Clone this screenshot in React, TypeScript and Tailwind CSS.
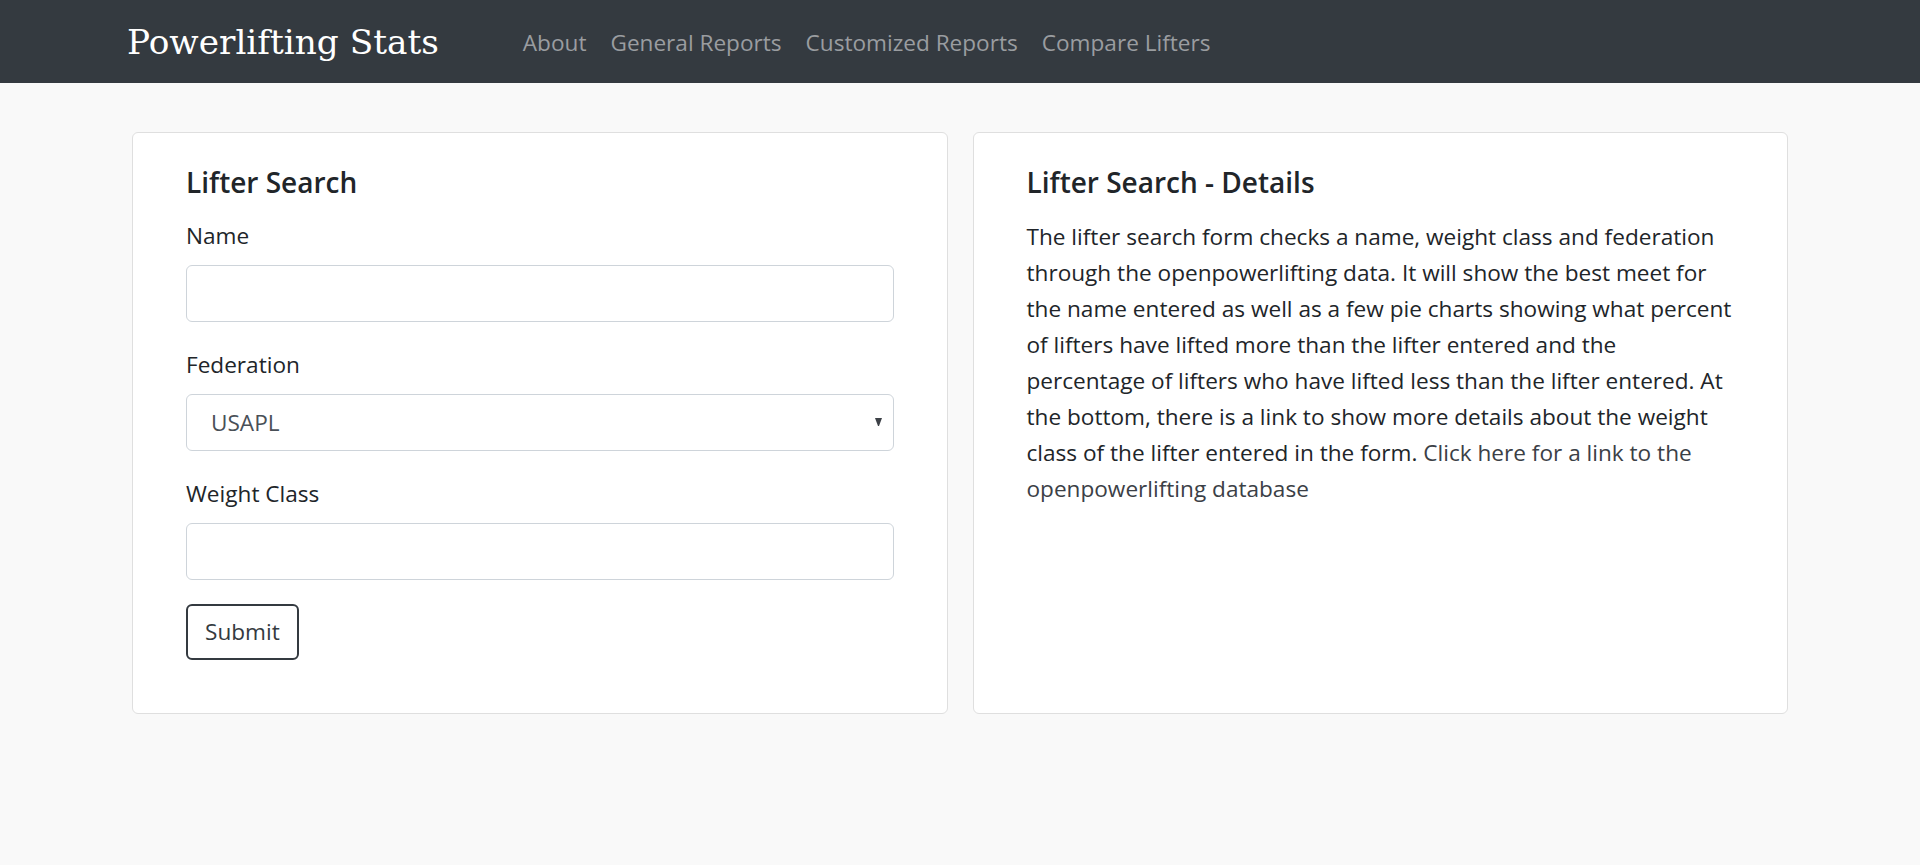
import React from "react";

const navLinks = ["About", "General Reports", "Customized Reports", "Compare Lifters"];

const labelCls = "block h-[36px] text-[22.6px] leading-[38px] text-[#212529] mb-[12px]";
const inputCls =
  "block w-full h-[57px] rounded-[6px] border border-[#ced4da] bg-white px-[18px] text-[22.6px] text-[#495057] outline-none";

const Navbar = () => (
  <nav className="bg-[#343a40] h-[83px]">
    <div className="mx-auto w-[1710px] px-[22px] h-full flex items-center">
      <a
        href="#"
        className="text-white text-[34.3px] leading-[40px] whitespace-nowrap"
        style={{ fontFamily: '"DejaVu Serif", serif' }}
      >
        Powerlifting Stats
      </a>
      <ul className="flex items-center ml-[72px] pt-[2px]">
        {navLinks.map((link) => (
          <li key={link}>
            <a href="#" className="block px-[12px] text-[22.6px] leading-[36px] text-[#9a9da0] whitespace-nowrap">
              {link}
            </a>
          </li>
        ))}
      </ul>
    </div>
  </nav>
);

const SearchForm = () => (
  <div className="bg-white border border-[#dfdfdf] rounded-[6px] pt-[30px] pb-[53px] px-[53px]">
    <h5 className="h-[36px] text-[28px] leading-[38px] font-semibold text-[#212529] mb-[18px]">Lifter Search</h5>
    <form onSubmit={(e) => e.preventDefault()}>
      <div className="mb-[24px]">
        <label className={labelCls}>Name</label>
        <input type="text" className={inputCls} />
      </div>
      <div className="mb-[24px]">
        <label className={labelCls}>Federation</label>
        <div className="relative">
          <select className={`${inputCls} appearance-none pl-[24px]`} defaultValue="USAPL">
            <option>USAPL</option>
            <option>IPF</option>
            <option>USPA</option>
          </select>
          <svg
            className="absolute right-[12px] top-[24px] pointer-events-none"
            width="7"
            height="9"
            viewBox="0 0 7 9"
          >
            <polygon points="0,0 7,0 4,8 3,8" fill="#3d4147" />
          </svg>
        </div>
      </div>
      <div className="mb-[24px]">
        <label className={labelCls}>Weight Class</label>
        <input type="text" className={inputCls} />
      </div>
      <button
        type="submit"
        className="h-[56px] px-[17px] rounded-[6px] border-2 border-[#343a40] bg-white text-[22.6px] leading-[38px] text-[#343a40]"
      >
        Submit
      </button>
    </form>
  </div>
);

const Details = () => (
  <div className="bg-white border border-[#dfdfdf] rounded-[6px] pt-[30px] pb-[53px] px-[53px]">
    <h5 className="h-[36px] text-[28px] leading-[38px] font-semibold text-[#212529] mb-[18px]">
      Lifter Search - Details
    </h5>
    <p className="pt-[1.5px] text-[22.6px] leading-[36px] text-[#212529]">
      The lifter search form checks a name, weight class and federation through the openpowerlifting
      data. It will show the best meet for the name entered as well as a few pie charts showing what
      percent of lifters have lifted more than the lifter entered and the percentage of lifters who
      have lifted less than the lifter entered. At the bottom, there is a link to show more details
      about the weight class of the lifter entered in the form.{" "}
      <a href="#" className="text-[#3b4046]">
        Click here for a link to the openpowerlifting database
      </a>
    </p>
  </div>
);

export default function App() {
  return (
    <div className="min-h-screen bg-[#f9f9f9]" style={{ fontFamily: '"Open Sans", "Noto Sans", sans-serif' }}>
      <Navbar />
      <main className="mx-auto w-[1656px] pt-[49px] grid grid-cols-2 gap-[25px] items-stretch">
        <SearchForm />
        <Details />
      </main>
    </div>
  );
}
